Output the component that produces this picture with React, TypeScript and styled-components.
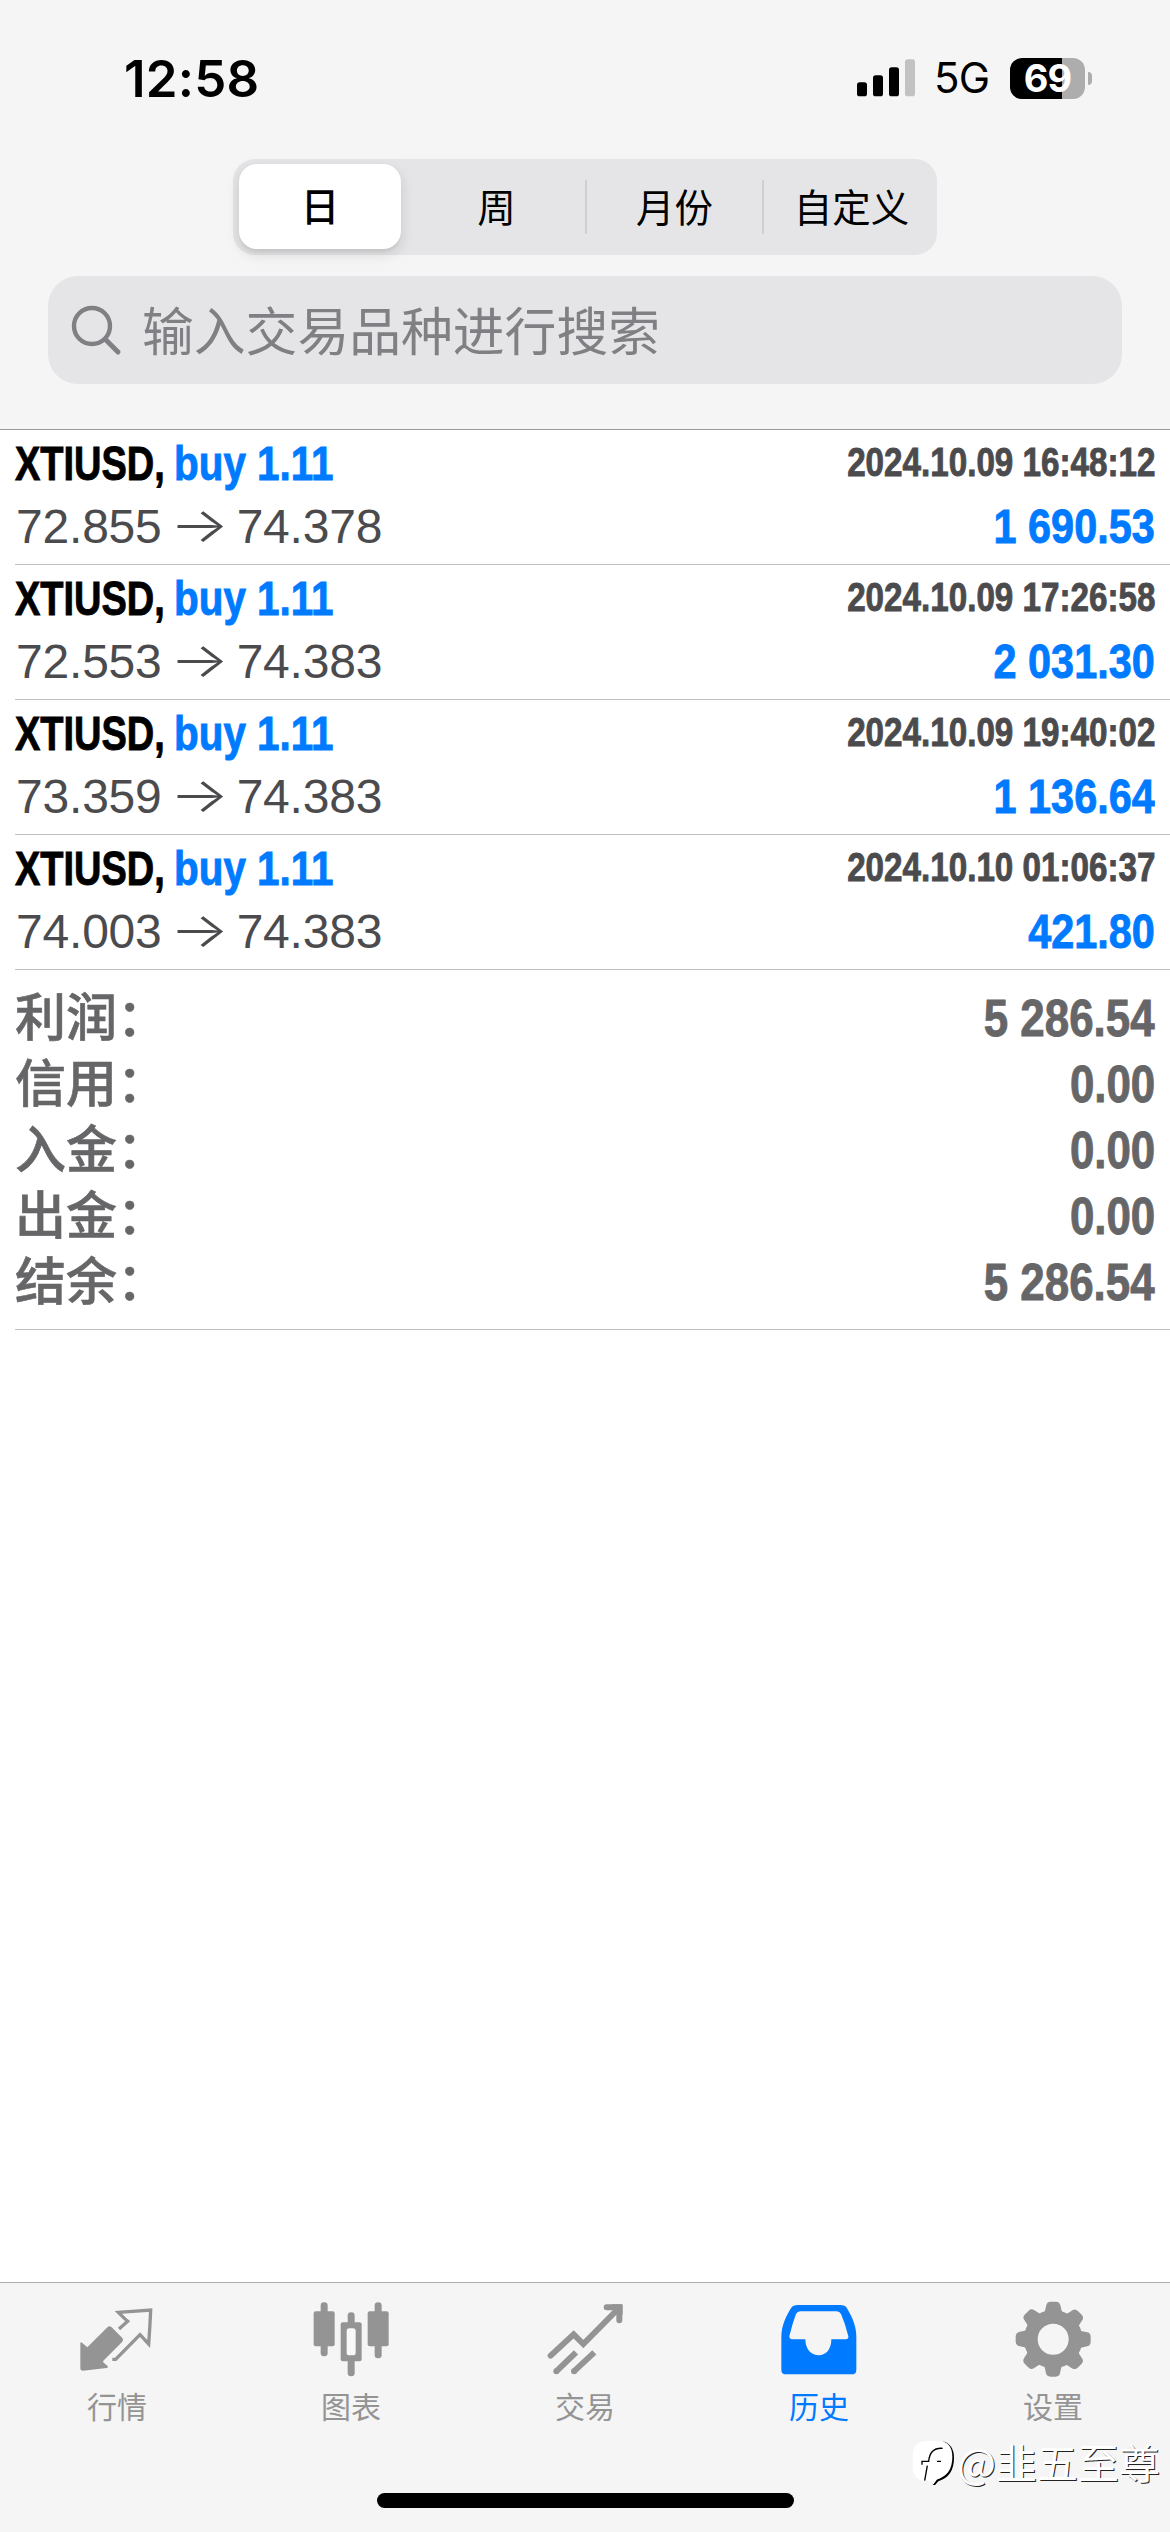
import React from "react";
import styled, { createGlobalStyle } from "styled-components";

const GlobalStyle = createGlobalStyle`
  *, *::before, *::after { box-sizing: border-box; }
  html, body { margin: 0; padding: 0; background: #fff; }
  body { font-family: "Liberation Sans", "Noto Sans CJK SC", sans-serif; }
`;

const Screen = styled.div`
  width: 1170px;
  height: 2532px;
  display: flex;
  flex-direction: column;
  overflow: hidden;
  background: #fff;
`;

const Header = styled.header`
  height: 430px;
  flex: none;
  display: flex;
  flex-direction: column;
  background: #f5f5f5;
  border-bottom: 1px solid #9a9a9c;
`;

const StatusBar = styled.div`
  height: 159px;
  flex: none;
  padding: 50px 78px 0 124px;
  display: flex;
  justify-content: space-between;
  align-items: flex-start;
`;

const Clock = styled.span`
  font: 600 51px/58px Inter, sans-serif;
  letter-spacing: 0.2px;
  color: #000;
`;

const StatusIcons = styled.div`
  height: 56px;
  display: flex;
  align-items: center;
`;

const Network = styled.span`
  width: 54px;
  margin: 0 22px 0 19px;
  font: 400 42px/58px Inter, sans-serif;
  letter-spacing: -0.8px;
  white-space: nowrap;
`;

const Battery = styled.div`
  display: flex;
  align-items: center;
  gap: 3px;
`;

const BatteryBody = styled.div<{ $level: number }>`
  width: 75px;
  height: 41px;
  border-radius: 12px;
  display: flex;
  align-items: center;
  justify-content: center;
  color: #fff;
  font: 700 38px/41px Inter, sans-serif;
  letter-spacing: -1px;
  background: linear-gradient(to right, #000 ${(p) => p.$level}%, #adadad ${(p) => p.$level}%);
`;

const BatteryTip = styled.span`
  width: 4px;
  height: 13px;
  border-radius: 0 5px 5px 0;
  background: #adadad;
`;

const Segments = styled.div`
  width: 704px;
  height: 96px;
  flex: none;
  margin-left: 233px;
  padding: 5px 0 0 6px;
  display: flex;
  border-radius: 22px;
  background: #e5e5e7;
`;

const Segment = styled.button<{ $active?: boolean; $divided?: boolean }>`
  width: ${(p) => (p.$active ? 162 : 177)}px;
  flex: none;
  height: ${(p) => (p.$active ? 85 : 86)}px;
  margin: 0 ${(p) => (p.$active ? 7 : 0)}px 0 0;
  padding: 0 0 5px ${(p) => (p.$divided ? 2 : 0)}px;
  border: 0;
  border-radius: ${(p) => (p.$active ? 18 : 0)}px;
  background: ${(p) =>
    p.$active
      ? "#fff"
      : p.$divided
        ? "linear-gradient(#cfcfd1, #cfcfd1) 0 16px / 2px 54px no-repeat"
        : "transparent"};
  box-shadow: ${(p) => (p.$active ? "0 5px 14px rgba(0,0,0,.13), 0 3px 2px rgba(0,0,0,.04)" : "none")};
  font: ${(p) => (p.$active ? 500 : 400)} 38.5px/56px "Noto Sans CJK SC", sans-serif;
  color: #000;
`;

const SearchField = styled.label`
  width: 1074px;
  height: 108px;
  flex: none;
  margin: 21px 0 0 48px;
  padding: 0 23px;
  display: flex;
  align-items: center;
  gap: 20px;
  border-radius: 30px;
  background: #e5e5e7;
  color: #808084;
`;

const Placeholder = styled.span`
  padding-bottom: 3px;
  font: 400 51.8px/76px "Noto Sans CJK SC", sans-serif;
`;

const Content = styled.main`
  flex: 1;
  padding-left: 15px;
`;

const Deal = styled.article`
  height: 135px;
  padding: 3px 15px 0 0;
  border-bottom: 1px solid #c0c0c2;
`;

const Line = styled.div<{ $h: number }>`
  height: ${(p) => p.$h}px;
  display: flex;
  justify-content: space-between;
  align-items: flex-start;
  line-height: 60px;
`;

const Title = styled.div`
  display: flex;
`;

const Condensed = styled.span<{
  $scale: number;
  $size?: number;
  $line?: number;
  $color: string;
  $width?: number;
  $end?: boolean;
}>`
  display: block;
  width: ${(p) => (p.$width ? `${p.$width}px` : "auto")};
  white-space: nowrap;
  font-family: "Liberation Sans", sans-serif;
  font-weight: 700;
  font-size: ${(p) => p.$size ?? 49}px;
  line-height: ${(p) => p.$line ?? 60}px;
  color: ${(p) => p.$color};
  -webkit-text-stroke: 0.9px ${(p) => p.$color};
  transform: scaleX(${(p) => p.$scale});
  transform-origin: ${(p) => (p.$end ? "right" : "left")} center;
`;

const Prices = styled.div`
  display: flex;
  padding-left: 1px;
  font-size: 48px;
  line-height: 62px;
  letter-spacing: -0.2px;
  color: #4b4b4e;
`;

const Arrow = styled.span`
  width: 75px;
  text-align: center;
  font-family: Inter, sans-serif;
  font-weight: 300;
  line-height: 58px;
  transform: scaleX(1.3);
`;

const Summary = styled.section`
  height: 360px;
  padding: 11px 15px 0 0;
  border-bottom: 1px solid #c0c0c2;
`;

const SummaryRow = styled.div`
  height: 66px;
  display: flex;
  justify-content: space-between;
  align-items: baseline;
  line-height: 66px;
`;

const SummaryLabel = styled.span`
  font: 500 51px/66px "Noto Sans CJK SC", sans-serif;
  color: #666668;
  -webkit-text-stroke: 0.6px #666668;
`;

const TabBar = styled.nav`
  position: relative;
  height: 250px;
  flex: none;
  display: flex;
  background: #f5f5f5;
  border-top: 1px solid #acacae;
`;

const Tab = styled.button<{ $active?: boolean }>`
  width: 234px;
  height: 160px;
  padding: 18px 0 0;
  border: 0;
  background: none;
  display: flex;
  flex-direction: column;
  align-items: center;
  gap: 8px;
  color: ${(p) => (p.$active ? "#007aff" : "#949494")};
  font: 400 30px/40px "Noto Sans CJK SC", sans-serif;
`;

const HomeIndicator = styled.div`
  position: absolute;
  left: 377px;
  bottom: 24px;
  width: 417px;
  height: 15px;
  border-radius: 8px;
  background: #000;
`;

const Watermark = styled.div`
  position: absolute;
  right: 10px;
  bottom: 41px;
  display: flex;
  align-items: center;
  gap: 3px;
  color: #fff;
  font: 400 41px/60px "Noto Sans CJK SC", sans-serif;
  text-shadow: 1px 1px 0 #222;
`;

const SignalIcon = () => (
  <svg width="58" height="38" viewBox="78 56 174 114">
    <rect x="78" y="126" width="30" height="42" rx="8" />
    <rect x="126" y="105" width="30" height="63" rx="8" />
    <rect x="174" y="81" width="30" height="87" rx="8" />
    <rect x="222" y="57" width="30" height="111" rx="8" fill="#c2c2c2" />
  </svg>
);

const SearchIcon = () => (
  <svg width="51" height="51" viewBox="0 0 51 51" fill="none" stroke="#808084" strokeWidth="4.4" strokeLinecap="round">
    <circle cx="21" cy="21" r="18" />
    <path d="M34.5 34.5 47 47" strokeWidth="5" />
  </svg>
);

const QuotesIcon = () => (
  <svg width="76" height="76" viewBox="116 92 228 228">
    <path
      fill="currentColor"
      d="M120 217q2-3 6 1l15 13 61-61q6-5 12 1l32 32q5 5 0 11l-57 57q-2 3 1 6l11 9q4 5-2 7l-71 8q-8 0-8-8z"
    />
    <path
      fill="none"
      stroke="currentColor"
      strokeWidth="10"
      d="m236 176 26-23q-8-7-28-27l97-7q-2 50-6 102-13-14-26-28l-73 74H216"
    />
  </svg>
);

const ChartIcon = () => (
  <svg width="76" height="76" viewBox="817 92 228 228" fill="currentColor">
    <rect x="840" y="96" width="21" height="162" rx="10" />
    <rect x="819" y="123" width="63" height="105" rx="6" />
    <rect x="1002" y="96" width="21" height="168" rx="10" />
    <rect x="981" y="123" width="63" height="105" rx="6" />
    <rect x="921" y="126" width="21" height="192" rx="10" />
    <rect x="900" y="156" width="63" height="117" rx="6" />
    <rect x="918" y="174" width="27" height="81" rx="8" fill="#f8f8f8" />
  </svg>
);

const TradeIcon = () => (
  <svg width="76" height="76" viewBox="139 92 228 228" fill="none" stroke="currentColor" strokeWidth="18">
    <path strokeLinecap="round" d="M150 256 219 192 248 221 352 116" />
    <path strokeLinecap="round" d="M318 111h38v39" />
    <path d="m166 304 60-58M219 304l62-58" />
    <circle cx="167" cy="303" r="9" fill="currentColor" stroke="none" />
    <circle cx="220" cy="303" r="9" fill="currentColor" stroke="none" />
    <path fill="currentColor" stroke="none" d="M333 102h29q4 0 4 4v28z" />
  </svg>
);

const HistoryIcon = () => (
  <svg width="76" height="76" viewBox="842 92 228 228">
    <path
      fill="currentColor"
      fillRule="evenodd"
      d="M892 104h128q14 0 19 8c14 24 29 52 29 86v100q0 14-14 14H857q-14 0-14-14v-98c0-36 16-66 30-88q5-8 19-8zM900 123q-9 0-13 8-11 29-20 67 0 9 9 9h39c0 29 17 48 40 48s38-19 38-48h43q9 0 8-9-9-38-22-67-4-8-13-8z"
    />
  </svg>
);

const gearTooth = "M519 134 Q524 124 527 106 Q529 96 540 96 H556 Q566 96 569 106 Q572 124 577 134z";

const SettingsIcon = () => (
  <svg width="76" height="76" viewBox="433 94 228 228" fill="currentColor">
    {[0, 45, 90, 135, 180, 225, 270, 315].map((angle) => (
      <path key={angle} d={gearTooth} transform={`rotate(${angle} 547.5 208.5)`} />
    ))}
    <circle cx="547.5" cy="208.5" r="67" fill="none" stroke="currentColor" strokeWidth="41" />
  </svg>
);

const WatermarkLogo = () => (
  <svg width="42" height="47" viewBox="112 522 126 141">
    <path d="M205 532q33 10 33 50 0 55-47 70l-14 16-5-3 14-18q41-15 44-65 0-33-25-50z" />
    <path fill="#fff" d="M114 575q0-44 45-44h31q43 0 43 48 0 54-46 67l-12 16-4-11h-12q-45 0-45-43z" />
    <path fill="none" stroke="#000" strokeWidth="4" d="M204 553q-38-3-42 39h-20v10M158 605l-8 45M187 592h12" />
  </svg>
);

const BLUE = "#007aff";

const deals = [
  { open: "72.855", close: "74.378", time: "2024.10.09 16:48:12", profit: "1 690.53" },
  { open: "72.553", close: "74.383", time: "2024.10.09 17:26:58", profit: "2 031.30" },
  { open: "73.359", close: "74.383", time: "2024.10.09 19:40:02", profit: "1 136.64" },
  { open: "74.003", close: "74.383", time: "2024.10.10 01:06:37", profit: "421.80" },
];

const totals = [
  ["利润", "5 286.54"],
  ["信用", "0.00"],
  ["入金", "0.00"],
  ["出金", "0.00"],
  ["结余", "5 286.54"],
];

const tabs = [
  { label: "行情", Icon: QuotesIcon },
  { label: "图表", Icon: ChartIcon },
  { label: "交易", Icon: TradeIcon },
  { label: "历史", Icon: HistoryIcon, active: true },
  { label: "设置", Icon: SettingsIcon },
];

export default function App() {
  return (
    <Screen>
      <GlobalStyle />
      <Header>
        <StatusBar>
          <Clock>12:58</Clock>
          <StatusIcons>
            <SignalIcon />
            <Network>5G</Network>
            <Battery>
              <BatteryBody $level={69}>69</BatteryBody>
              <BatteryTip />
            </Battery>
          </StatusIcons>
        </StatusBar>
        <Segments>
          <Segment $active>日</Segment>
          <Segment>周</Segment>
          <Segment $divided>月份</Segment>
          <Segment $divided>自定义</Segment>
        </Segments>
        <SearchField>
          <SearchIcon />
          <Placeholder>输入交易品种进行搜索</Placeholder>
        </SearchField>
      </Header>
      <Content>
        {deals.map((deal) => (
          <Deal key={deal.time}>
            <Line $h={63}>
              <Title>
                <Condensed $scale={0.775} $color="#000" $width={159}>XTIUSD,</Condensed>
                <Condensed $scale={0.825} $color={BLUE}>buy 1.11</Condensed>
              </Title>
              <Condensed $scale={0.83} $size={40} $line={59} $color="#4b4b4e" $end>{deal.time}</Condensed>
            </Line>
            <Line $h={60}>
              <Prices>
                {deal.open}
                <Arrow>→</Arrow>
                {deal.close}
              </Prices>
              <Condensed $scale={0.845} $color={BLUE} $end>{deal.profit}</Condensed>
            </Line>
          </Deal>
        ))}
        <Summary>
          {totals.map(([label, value]) => (
            <SummaryRow key={label}>
              <SummaryLabel>{label}：</SummaryLabel>
              <Condensed $scale={0.86} $size={51} $line={66} $color="#666668" $end>{value}</Condensed>
            </SummaryRow>
          ))}
        </Summary>
      </Content>
      <TabBar>
        {tabs.map(({ label, Icon, active }) => (
          <Tab key={label} $active={active}>
            <Icon />
            {label}
          </Tab>
        ))}
        <HomeIndicator />
        <Watermark>
          <WatermarkLogo />
          @韭五至尊
        </Watermark>
      </TabBar>
    </Screen>
  );
}
